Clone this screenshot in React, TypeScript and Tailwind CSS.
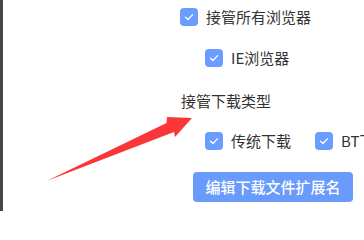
import React from "react";

function Check() {
  return (
    <span className="flex h-[18px] w-[18px] shrink-0 items-center justify-center rounded-[4px] bg-[#6b9cff]">
      <svg width="10" height="8" viewBox="0 0 10 8" fill="none">
        <path d="M1.5 4.2 L4 6.5 L8.6 1.6" stroke="#ffffff" strokeWidth="1.3" strokeLinecap="round" strokeLinejoin="round" />
      </svg>
    </span>
  );
}

function Item({ label }: { label: string }) {
  return (
    <div className="flex h-[18px] items-center gap-[8px] whitespace-nowrap">
      <Check />
      <span className="text-[15px] leading-[18px] text-[#333333]">{label}</span>
    </div>
  );
}

export default function App() {
  return (
    <div
      className="relative flex h-[211px] w-[364px] overflow-hidden bg-white"
      style={{ fontFamily: '"Noto Sans CJK SC", "Noto Sans", sans-serif' }}
    >
      <div className="h-full w-[3px] shrink-0 bg-[#464646]" />
      <div className="flex flex-col pl-[177px] pt-[8px]">
        <Item label="接管所有浏览器" />
        <div className="mt-[23px] pl-[25px]">
          <Item label="IE浏览器" />
        </div>
        <div className="mt-[24px] h-[20px] whitespace-nowrap pl-[1px] text-[15px] leading-[20px] text-[#333333]">
          接管下载类型
        </div>
        <div className="mt-[21px] flex gap-[24px] pl-[25px]">
          <Item label="传统下载" />
          <Item label="BT下载" />
        </div>
        <button className="ml-[13px] mt-[22px] flex h-[30px] w-[160px] items-center justify-center whitespace-nowrap rounded-[4px] bg-[#699bfc] text-[15px] font-medium text-white">
          编辑下载文件扩展名
        </button>
      </div>
      <svg className="pointer-events-none absolute left-0 top-0" width="364" height="211" viewBox="0 0 364 211">
        <polygon
          points="46.5,181 166.5,123 167,117 192,118 175,137 174,132"
          fill="#fb3638"
        />
      </svg>
    </div>
  );
}
